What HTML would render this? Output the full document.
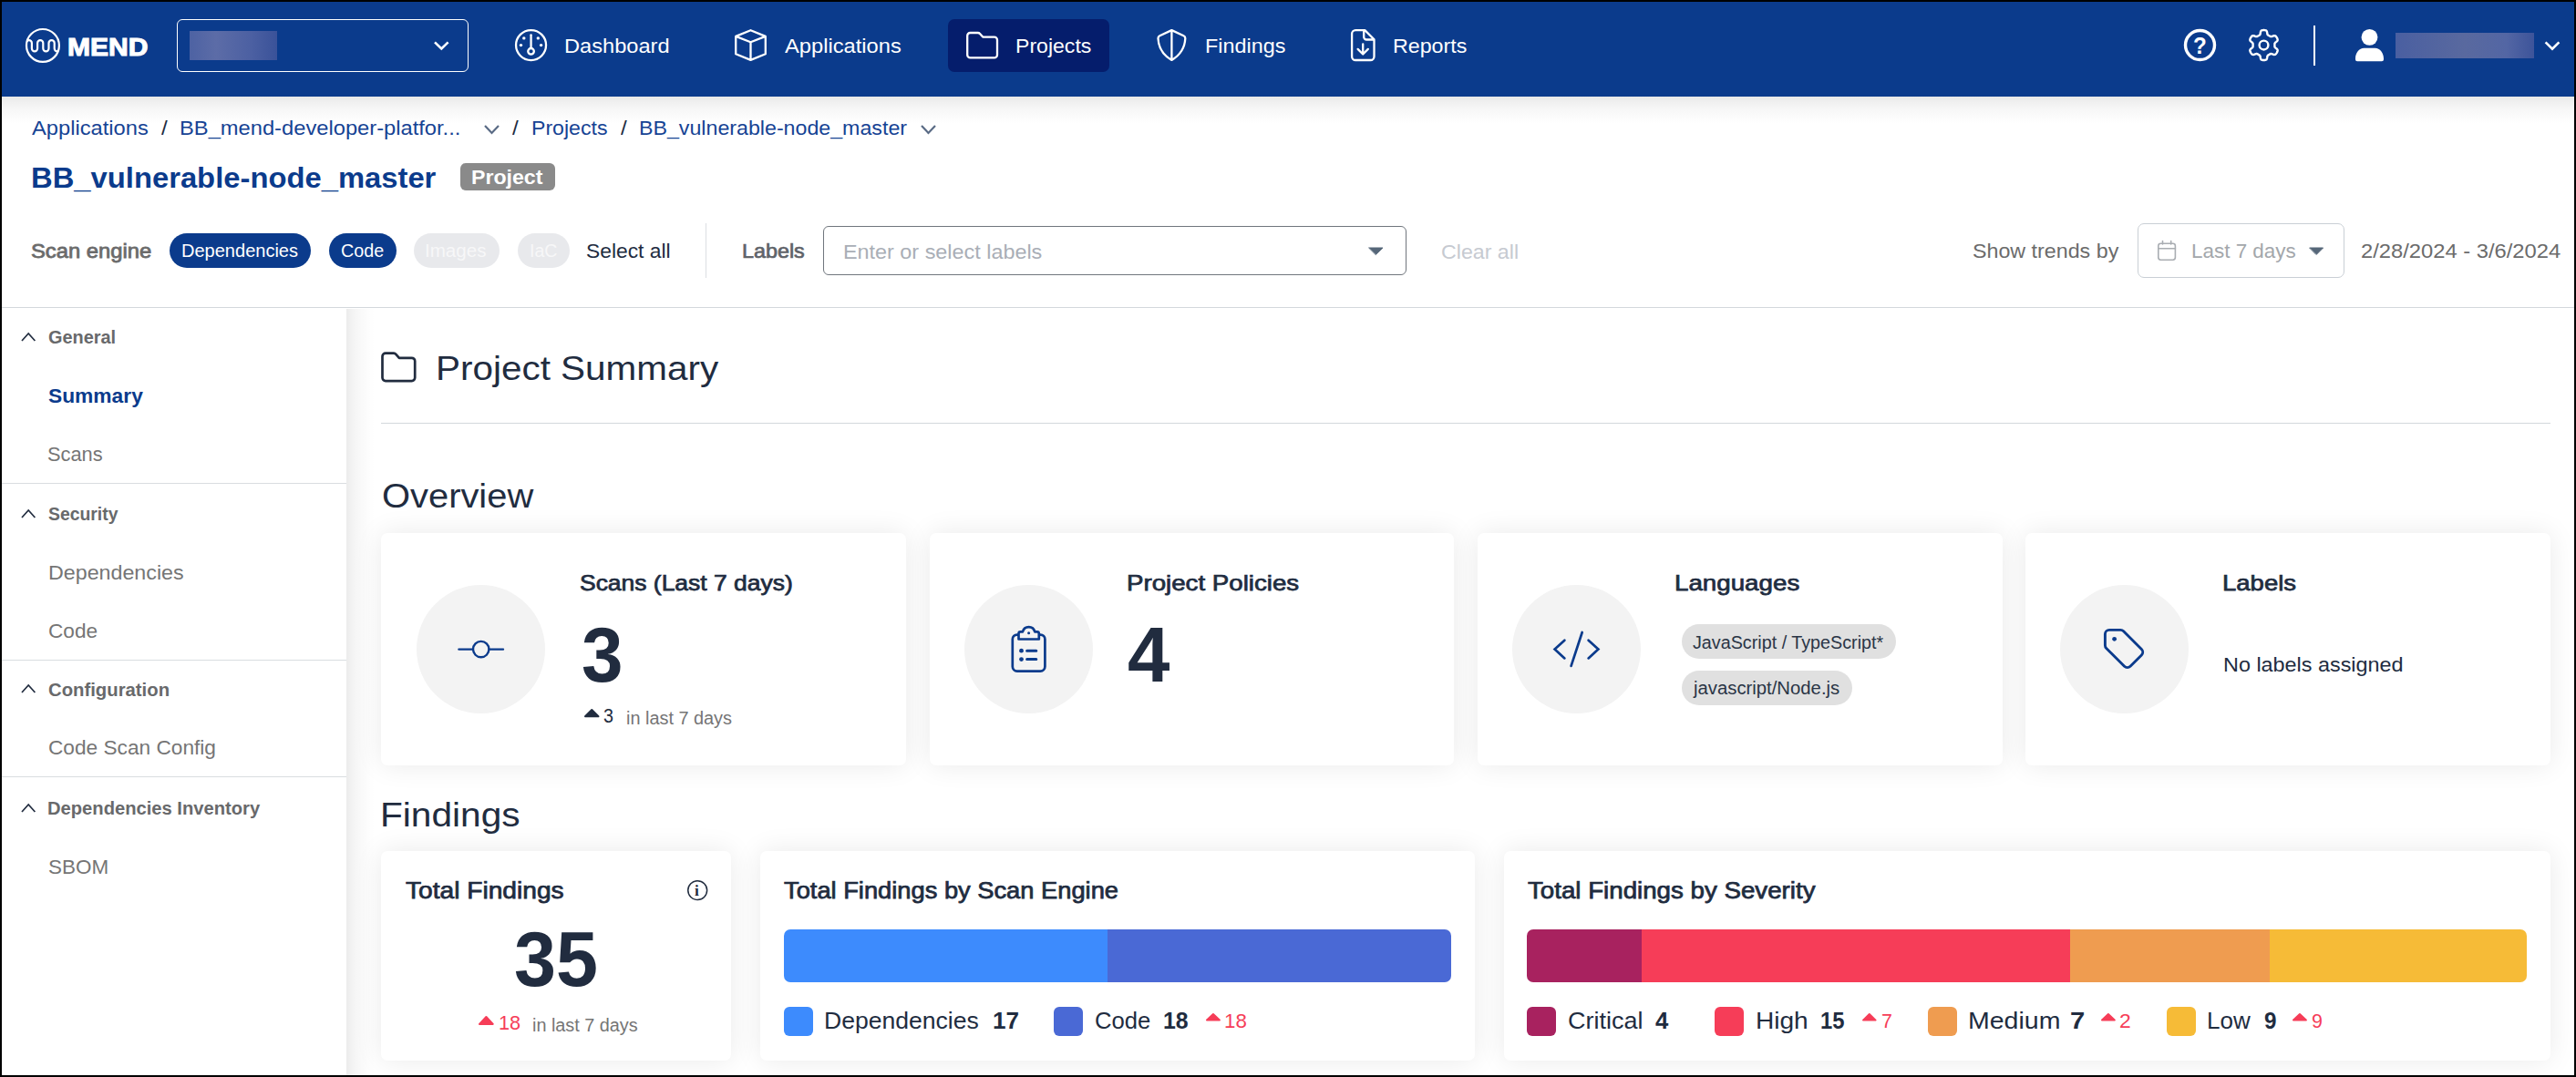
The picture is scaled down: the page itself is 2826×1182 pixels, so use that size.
<!DOCTYPE html>
<html lang="en">
<head>
<meta charset="utf-8">
<title>BB_vulnerable-node_master - Project Summary</title>
<style>

*{box-sizing:border-box;margin:0;padding:0}
html,body{width:2826px;height:1182px;overflow:hidden;background:#000}
body{font-family:"Liberation Sans",sans-serif;color:#212c3f}
#app{position:absolute;left:2px;top:2px;width:2822px;height:1178px;background:#fff;overflow:hidden}
#app>header,#app>nav,#app>section,#app>aside,#app>main{display:contents}
#app .abs, #app svg, .t{position:absolute}
.t{white-space:pre;line-height:1;transform-origin:0 0;display:block;font-weight:400;font-style:normal}
.navbg{left:0;top:0;width:2822px;height:104px;background:#0b3b8c}
.navshadow{left:0;top:103.5px;width:2822px;height:30px;background:linear-gradient(#e8e8e8 0,#f0f0f0 20%,#f7f7f7 48%,#fcfcfc 80%,#fff 100%)}
.org{left:192px;top:19px;width:320px;height:58px;border:1.5px solid #fff;border-radius:6px}
.blur1{left:206px;top:32px;width:96px;height:32px;background:linear-gradient(90deg,#4d62a3,#5c6ca7 30%,#4c60a2 70%,#3a5299)}
.blur2{left:2626px;top:33.9px;width:152px;height:28px;background:linear-gradient(90deg,#4a5fa1,#59699f 50%,#5366a4 80%,#3d549a)}
.tab{left:1038px;top:19px;width:177px;height:58px;background:#051d6c;border-radius:7px}
.vbar{left:2535.6px;top:26.3px;width:2.5px;height:43.5px;background:#fff}
.badge{left:503px;top:177px;width:104px;height:30px;background:#8a8a8a;border-radius:6px}
.chip{height:38px;top:254px;border-radius:19px;background:#0b3b8c}
.chip.off{background:#e8e9ec}
.vdiv{left:771.5px;top:243px;width:1.5px;height:60px;background:#dcdfe3}
.input{left:901px;top:246px;width:640px;height:53.5px;border:1.5px solid #70767d;border-radius:6px;background:#fff}
.trend{left:2343px;top:243px;width:227px;height:60px;border:1.5px solid #c9cfd5;border-radius:7px;background:#fff}
.hline{left:0;top:334.7px;width:2822px;height:1.6px;background:#d3d8dc}
.sidebg{left:0;top:336.3px;width:378px;height:842px;background:#fff}
.sdiv{left:0;width:378px;height:1.3px;background:#d9dde0}
.mainbg{left:378px;top:336.3px;width:2444px;height:842px;background:#fff}
.mshadow{left:378px;top:336.5px;width:32px;height:842px;background:linear-gradient(90deg,rgba(0,0,0,.078),rgba(0,0,0,.048) 20%,rgba(0,0,0,.024) 48%,rgba(0,0,0,.008) 75%,rgba(0,0,0,0))}
.hr{left:416px;top:461.8px;width:2380px;height:1.6px;background:#d3d8dc}
.card{background:#fff;border-radius:7px;box-shadow:0 0 30px rgba(0,0,0,.085)}
.circ{width:141px;height:141px;border-radius:50%;background:#f3f3f3;top:640px}
.lchip{left:1843px;height:37.4px;border-radius:19px;background:#e0e0e0}
.bar{top:1018px;height:58px;border-radius:7px;overflow:hidden}
.bar i{position:absolute;top:0;height:58px}
.sq{top:1103px;width:32px;height:32px;border-radius:6px}

</style>
</head>
<body>
<div id="app">
<header id="topnav">
<div class="abs navbg" style=""></div>
<div class="abs navshadow" style=""></div>
<svg style="left:23.00px;top:26.00px" width="44.00" height="44.00" viewBox="25.00 28.00 44.00 44.00" fill="none" stroke-linecap="round" stroke-linejoin="round" ><defs><clipPath id="lc"><circle cx="46.95" cy="49.95" r="18.4"/></clipPath></defs><circle cx="46.95" cy="49.95" r="17.95" stroke="#fff" stroke-width="2.2"/><path d="M28.7,51 V47.3 A3.1,3.1 0 0 1 34.9,47.3 V53.2 A3.1,3.1 0 0 0 41.1,53.2 V47.3 A3.1,3.1 0 0 1 47.3,47.3 V53.2 A3.1,3.1 0 0 0 53.5,53.2 V47.3 A3.1,3.1 0 0 1 59.7,47.3 V53.2 A3.1,3.1 0 0 0 65.9,53.2" stroke="#fff" stroke-width="2.2" clip-path="url(#lc)"/></svg>
<div class="abs org" style=""></div>
<div class="abs blur1" style=""></div>
<svg style="left:470.00px;top:40.00px" width="24.00" height="18.00" viewBox="472.00 42.00 24.00 18.00" fill="none" stroke-linecap="round" stroke-linejoin="round" ><path d="M477,46.4 L484.3,53.5 L491.600,46.4" stroke="#fff" stroke-width="2.6" stroke-linecap="butt" stroke-linejoin="miter"/></svg>
<svg style="left:561.00px;top:28.00px" width="39.00" height="39.00" viewBox="563.00 30.00 39.00 39.00" fill="none" stroke-linecap="round" stroke-linejoin="round" ><circle cx="582.55" cy="49.55" r="16.5" stroke="#fff" stroke-width="2.3"/><path d="M582.55,38.3 V53" stroke="#fff" stroke-width="2.3"/><circle cx="582.55" cy="56.3" r="3.3" stroke="#fff" stroke-width="2.3"/><g fill="#fff"><circle cx="571.5" cy="49.6" r="1.7"/><circle cx="574.8" cy="41.9" r="1.7"/><circle cx="590.3" cy="41.9" r="1.7"/><circle cx="593.6" cy="49.6" r="1.7"/></g></svg>
<svg style="left:801.00px;top:28.00px" width="41.00" height="39.00" viewBox="803.00 30.00 41.00 39.00" fill="none" stroke-linecap="round" stroke-linejoin="round" ><path d="M823.5,33.2 L839.8,39.9 V59.2 L823.5,65.9 L807.2,59.2 V39.9 Z M807.2,39.9 L823.5,46.3 L839.8,39.9 M823.5,46.3 V65.9" stroke="#fff" stroke-width="2.3"/></svg>
<div class="abs tab" style=""></div>
<svg style="left:1056.00px;top:30.00px" width="40.00" height="35.00" viewBox="1058.00 32.00 40.00 35.00" fill="none" stroke-linecap="round" stroke-linejoin="round" ><path d="M1061.2,39.2 a3.2,3.2 0 0 1 3.2,-3.2 h8.3 a3,3 0 0 1 2.3,1 l3.2,3.6 h12.6 a3.2,3.2 0 0 1 3.2,3.2 v16.4 a3.2,3.2 0 0 1 -3.2,3.2 h-26.4 a3.2,3.2 0 0 1 -3.2,-3.2 z" stroke="#fff" stroke-width="2.3"/></svg>
<svg style="left:1264.00px;top:28.00px" width="39.00" height="39.00" viewBox="1266.00 30.00 39.00 39.00" fill="none" stroke-linecap="round" stroke-linejoin="round" ><path d="M1285.4,33.100 L1272.3,39.2 Q1270.4,40.100 1270.5,42.300 C1271,52 1276.200,60.600 1285.4,65.900 C1294.600,60.600 1299.800,52 1300.300,42.300 Q1300.4,40.100 1298.500,39.2 Z M1285.4,33.100 V65.900" stroke="#fff" stroke-width="2.3"/></svg>
<svg style="left:1477.00px;top:28.00px" width="33.00" height="39.00" viewBox="1479.00 30.00 33.00 39.00" fill="none" stroke-linecap="round" stroke-linejoin="round" ><path d="M1487.100,33.100 h10.200 l10.200,10.200 v18.700 a4,4 0 0 1 -4,4 h-16.400 a4,4 0 0 1 -4,-4 v-24.900 a4,4 0 0 1 4,-4 z M1496.200,33.300 v7.200 a3,3 0 0 0 3,3 h8.100" stroke="#fff" stroke-width="2.3"/><path d="M1495.200,48.300 V59.200 M1489.600,53.900 L1495.200,59.500 L1500.800,53.900" stroke="#fff" stroke-width="2.3"/></svg>
<svg style="left:2391.00px;top:27.00px" width="41.00" height="41.00" viewBox="2393.00 29.00 41.00 41.00" fill="none" stroke-linecap="round" stroke-linejoin="round" ><circle cx="2413.5" cy="49.55" r="16" stroke="#fff" stroke-width="3.4"/></svg>
<svg style="left:2462.00px;top:27.00px" width="40.00" height="41.00" viewBox="2464.00 29.00 40.00 41.00" fill="none" stroke-linecap="round" stroke-linejoin="round" ><path d="M2483.50,33.05 L2484.22,33.07 L2484.94,33.15 L2485.64,33.30 L2486.30,33.65 L2486.85,34.43 L2487.18,35.83 L2487.38,37.24 L2487.69,38.04 L2488.10,38.45 L2488.54,38.73 L2489.00,38.99 L2489.45,39.24 L2489.90,39.51 L2490.35,39.77 L2490.81,40.02 L2491.37,40.17 L2492.22,40.03 L2493.54,39.51 L2494.92,39.08 L2495.87,39.17 L2496.50,39.57 L2496.99,40.11 L2497.41,40.69 L2497.79,41.30 L2498.13,41.93 L2498.42,42.59 L2498.64,43.28 L2498.68,44.03 L2498.27,44.89 L2497.22,45.87 L2496.10,46.76 L2495.56,47.42 L2495.41,47.98 L2495.39,48.51 L2495.40,49.03 L2495.40,49.55 L2495.40,50.07 L2495.39,50.59 L2495.41,51.12 L2495.56,51.68 L2496.10,52.34 L2497.22,53.23 L2498.27,54.21 L2498.68,55.07 L2498.64,55.82 L2498.42,56.51 L2498.13,57.17 L2497.79,57.80 L2497.41,58.41 L2496.99,58.99 L2496.50,59.53 L2495.87,59.93 L2494.92,60.02 L2493.54,59.59 L2492.22,59.07 L2491.37,58.93 L2490.81,59.08 L2490.35,59.33 L2489.90,59.59 L2489.45,59.86 L2489.00,60.11 L2488.54,60.37 L2488.10,60.65 L2487.69,61.06 L2487.38,61.86 L2487.18,63.27 L2486.85,64.67 L2486.30,65.45 L2485.64,65.80 L2484.94,65.95 L2484.22,66.03 L2483.50,66.05 L2482.78,66.03 L2482.06,65.95 L2481.36,65.80 L2480.70,65.45 L2480.15,64.67 L2479.82,63.27 L2479.62,61.86 L2479.31,61.06 L2478.90,60.65 L2478.46,60.37 L2478.00,60.11 L2477.55,59.86 L2477.10,59.59 L2476.65,59.33 L2476.19,59.08 L2475.63,58.93 L2474.78,59.07 L2473.46,59.59 L2472.08,60.02 L2471.13,59.93 L2470.50,59.53 L2470.01,58.99 L2469.59,58.41 L2469.21,57.80 L2468.87,57.17 L2468.58,56.51 L2468.36,55.82 L2468.32,55.07 L2468.73,54.21 L2469.78,53.23 L2470.90,52.34 L2471.44,51.68 L2471.59,51.12 L2471.61,50.59 L2471.60,50.07 L2471.60,49.55 L2471.60,49.03 L2471.61,48.51 L2471.59,47.98 L2471.44,47.42 L2470.90,46.76 L2469.78,45.87 L2468.73,44.89 L2468.32,44.03 L2468.36,43.28 L2468.58,42.59 L2468.87,41.93 L2469.21,41.30 L2469.59,40.69 L2470.01,40.11 L2470.50,39.57 L2471.13,39.17 L2472.08,39.08 L2473.46,39.51 L2474.78,40.03 L2475.63,40.17 L2476.19,40.02 L2476.65,39.77 L2477.10,39.51 L2477.55,39.24 L2478.00,38.99 L2478.46,38.73 L2478.90,38.45 L2479.31,38.04 L2479.62,37.24 L2479.82,35.83 L2480.15,34.43 L2480.70,33.65 L2481.36,33.30 L2482.06,33.15 L2482.78,33.07 Z" stroke="#fff" stroke-width="2.4"/><circle cx="2483.5" cy="49.55" r="4.9" stroke="#fff" stroke-width="2.4"/></svg>
<div class="abs vbar" style=""></div>
<svg style="left:2580.00px;top:28.00px" width="35.00" height="39.00" viewBox="2582.00 30.00 35.00 39.00" fill="none" stroke-linecap="round" stroke-linejoin="round" ><circle cx="2599.500" cy="40.850" r="8.950" fill="#fff"/><path d="M2593.500,52.700 h12 c5.500,0 9.500,5.500 9.500,11.500 v1 a2,2 0 0 1 -2,2 h-27 a2,2 0 0 1 -2,-2 v-1 c0,-6 4,-11.500 9.500,-11.500 z" fill="#fff"/></svg>
<div class="abs blur2" style=""></div>
<svg style="left:2786.00px;top:40.00px" width="24.00" height="18.00" viewBox="2788.00 42.00 24.00 18.00" fill="none" stroke-linecap="round" stroke-linejoin="round" ><path d="M2792.6,46.4 L2800,53.7 L2807.4,46.4" stroke="#fff" stroke-width="2.6" stroke-linecap="butt" stroke-linejoin="miter"/></svg>
<b class="t" style="left:71.74px;top:34.50px;font-size:28.4px;color:#fff;transform:scaleX(1.0574);font-weight:700;-webkit-text-stroke:1.1px #fff">MEND</b>
<span class="t" style="left:617.45px;top:38.00px;font-size:22.6px;color:#fff;transform:scaleX(1.0462)">Dashboard</span>
<span class="t" style="left:859.00px;top:38.00px;font-size:22.6px;color:#fff;transform:scaleX(1.0491)">Applications</span>
<span class="t" style="left:1111.98px;top:38.00px;font-size:22.6px;color:#fff;transform:scaleX(1.0209)">Projects</span>
<span class="t" style="left:1320.47px;top:38.00px;font-size:22.6px;color:#fff;transform:scaleX(1.0345)">Findings</span>
<span class="t" style="left:1525.97px;top:38.00px;font-size:22.6px;color:#fff;transform:scaleX(1.0281)">Reports</span>
<span class="t" style="left:2404.45px;top:35.70px;font-size:25.3px;color:#fff;transform:scaleX(0.9538);font-weight:700">?</span>
</header>
<nav id="breadcrumbs">
<svg style="left:526.50px;top:133.00px" width="21.00" height="14.00" viewBox="528.50 135.00 21.00 14.00" fill="none" stroke-linecap="round" stroke-linejoin="round" ><path d="M531.50,138.00 L539.00,146.00 L546.50,138.00" stroke="#5a6b85" stroke-width="2.2" stroke-linecap="butt" stroke-linejoin="miter"/></svg>
<svg style="left:1006.00px;top:133.30px" width="21.00" height="14.00" viewBox="1008.00 135.30 21.00 14.00" fill="none" stroke-linecap="round" stroke-linejoin="round" ><path d="M1011.00,138.30 L1018.50,146.30 L1026.00,138.30" stroke="#5a6b85" stroke-width="2.2" stroke-linecap="butt" stroke-linejoin="miter"/></svg>
<div class="abs badge" style=""></div>
<span class="t" style="left:33.00px;top:127.50px;font-size:22.5px;color:#164394;transform:scaleX(1.0531)">Applications</span>
<span class="t" style="left:174.50px;top:127.50px;font-size:22.5px;color:#212c3f;transform:scaleX(1.0714)">/</span>
<span class="t" style="left:194.95px;top:127.50px;font-size:22.5px;color:#164394;transform:scaleX(1.0537)">BB_mend-developer-platfor...</span>
<span class="t" style="left:560.00px;top:127.50px;font-size:22.5px;color:#212c3f;transform:scaleX(1.0714)">/</span>
<span class="t" style="left:580.77px;top:127.50px;font-size:22.5px;color:#164394;transform:scaleX(1.0272)">Projects</span>
<span class="t" style="left:678.50px;top:127.50px;font-size:22.5px;color:#212c3f;transform:scaleX(1.0714)">/</span>
<span class="t" style="left:698.97px;top:127.50px;font-size:22.5px;color:#164394;transform:scaleX(1.0310)">BB_vulnerable-node_master</span>
<h1 class="t" style="left:31.92px;top:178.00px;font-size:31.5px;color:#0b3b8c;transform:scaleX(1.0403);font-weight:700">BB_vulnerable-node_master</h1>
<span class="t" style="left:514.95px;top:182.00px;font-size:22px;color:#fff;transform:scaleX(1.0504);font-weight:700">Project</span>
</nav>
<section id="filters">
<div class="abs chip" style="left:184px;width:155px"></div>
<div class="abs chip" style="left:359px;width:74px"></div>
<div class="abs chip off" style="left:452px;width:94px"></div>
<div class="abs chip off" style="left:566px;width:57px"></div>
<div class="abs vdiv" style=""></div>
<div class="abs input" style=""></div>
<svg style="left:1498.50px;top:269.30px" width="17.00" height="9.30" viewBox="1500.50 271.30 17.00 9.30" fill="none" stroke-linecap="round" stroke-linejoin="round" ><path d="M1501.5,272.3 H1516.5 L1509.0,279.6 Z" fill="#566779" stroke="#566779" stroke-width="1" /></svg>
<div class="abs trend" style=""></div>
<svg style="left:2363.00px;top:260.00px" width="24.00" height="26.00" viewBox="2365.00 262.00 24.00 26.00" fill="none" stroke-linecap="round" stroke-linejoin="round" ><rect x="2367.8" y="267.2" width="18.6" height="18" rx="2.6" stroke="#a9adb2" stroke-width="1.6"/><path d="M2367.8,272.8 H2386.4 M2372.5,264.6 V268 M2381.7,264.6 V268" stroke="#a9adb2" stroke-width="1.6"/></svg>
<svg style="left:2531.00px;top:269.30px" width="16.60" height="9.30" viewBox="2533.00 271.30 16.60 9.30" fill="none" stroke-linecap="round" stroke-linejoin="round" ><path d="M2534,272.3 H2548.6 L2541.3,279.6 Z" fill="#566779" stroke="#566779" stroke-width="1" /></svg>
<div class="abs hline" style=""></div>
<span class="t" style="left:31.96px;top:261.60px;font-size:22.8px;color:#6b6b6b;transform:scaleX(1.0434);-webkit-text-stroke:0.8px #6b6b6b">Scan engine</span>
<span class="t" style="left:197.00px;top:263.00px;font-size:20px;color:#fff;transform:scaleX(1.0010)">Dependencies</span>
<span class="t" style="left:371.51px;top:263.00px;font-size:20px;color:#fff;transform:scaleX(0.9852)">Code</span>
<span class="t" style="left:464.47px;top:263.00px;font-size:20px;color:#f7f7f8;transform:scaleX(1.0296)">Images</span>
<span class="t" style="left:579.02px;top:263.00px;font-size:20px;color:#f7f7f8;transform:scaleX(0.9771)">IaC</span>
<span class="t" style="left:641.49px;top:263.00px;font-size:22.5px;color:#212c3f;transform:scaleX(1.0135)">Select all</span>
<span class="t" style="left:811.96px;top:263.00px;font-size:22.5px;color:#5f6369;transform:scaleX(1.0376);-webkit-text-stroke:0.7px #5f6369">Labels</span>
<span class="t" style="left:922.96px;top:263.70px;font-size:22.5px;color:#a9aeb6;transform:scaleX(1.0390)">Enter or select labels</span>
<span class="t" style="left:1578.97px;top:263.50px;font-size:22.5px;color:#c6cad1;transform:scaleX(1.0307)">Clear all</span>
<span class="t" style="left:2161.97px;top:263.00px;font-size:22.5px;color:#6b6b6b;transform:scaleX(1.0334)">Show trends by</span>
<span class="t" style="left:2401.50px;top:263.00px;font-size:22.5px;color:#a3a7ab;transform:scaleX(0.9972)">Last 7 days</span>
<span class="t" style="left:2588.34px;top:263.00px;font-size:22.5px;color:#6b6b6b;transform:scaleX(1.0555)">2/28/2024 - 3/6/2024</span>
</section>
<aside id="sidebar">
<div class="abs sidebg" style=""></div>
<div class="abs sdiv" style="top:528.2px"></div>
<div class="abs sdiv" style="top:721.8px"></div>
<div class="abs sdiv" style="top:850.2px"></div>
<svg style="left:18.90px;top:360.80px" width="20.40" height="14.00" viewBox="20.90 362.80 20.40 14.00" fill="none" stroke-linecap="round" stroke-linejoin="round" ><path d="M23.90,373.80 L31.10,365.80 L38.30,373.80" stroke="#212c3f" stroke-width="1.7" stroke-linecap="butt" stroke-linejoin="miter"/></svg>
<svg style="left:18.90px;top:554.50px" width="20.40" height="14.00" viewBox="20.90 556.50 20.40 14.00" fill="none" stroke-linecap="round" stroke-linejoin="round" ><path d="M23.90,567.50 L31.10,559.50 L38.30,567.50" stroke="#212c3f" stroke-width="1.7" stroke-linecap="butt" stroke-linejoin="miter"/></svg>
<svg style="left:18.90px;top:747.40px" width="20.40" height="14.00" viewBox="20.90 749.40 20.40 14.00" fill="none" stroke-linecap="round" stroke-linejoin="round" ><path d="M23.90,760.40 L31.10,752.40 L38.30,760.40" stroke="#212c3f" stroke-width="1.7" stroke-linecap="butt" stroke-linejoin="miter"/></svg>
<svg style="left:18.90px;top:877.70px" width="20.40" height="14.00" viewBox="20.90 879.70 20.40 14.00" fill="none" stroke-linecap="round" stroke-linejoin="round" ><path d="M23.90,890.70 L31.10,882.70 L38.30,890.70" stroke="#212c3f" stroke-width="1.7" stroke-linecap="butt" stroke-linejoin="miter"/></svg>
<span class="t" style="left:51.00px;top:358.00px;font-size:20px;color:#68696b;transform:scaleX(0.9956);font-weight:700">General</span>
<span class="t" style="left:51.40px;top:421.60px;font-size:22px;color:#0b3b8c;transform:scaleX(1.0353);font-weight:700">Summary</span>
<span class="t" style="left:50.43px;top:485.50px;font-size:22.5px;color:#757575;transform:scaleX(0.9693)">Scans</span>
<span class="t" style="left:50.60px;top:551.70px;font-size:20px;color:#68696b;transform:scaleX(0.9686);font-weight:700">Security</span>
<span class="t" style="left:50.97px;top:615.60px;font-size:22.5px;color:#757575;transform:scaleX(1.0329)">Dependencies</span>
<span class="t" style="left:51.00px;top:679.50px;font-size:22.5px;color:#757575;transform:scaleX(1.0043)">Code</span>
<span class="t" style="left:51.00px;top:744.70px;font-size:20px;color:#68696b;transform:scaleX(1.0149);font-weight:700">Configuration</span>
<span class="t" style="left:50.99px;top:808.00px;font-size:22.5px;color:#757575;transform:scaleX(1.0072)">Code Scan Config</span>
<span class="t" style="left:49.99px;top:875.00px;font-size:20px;color:#68696b;transform:scaleX(1.0084);font-weight:700">Dependencies Inventory</span>
<span class="t" style="left:50.60px;top:938.50px;font-size:22.5px;color:#757575;transform:scaleX(0.9982)">SBOM</span>
</aside>
<main id="content">
<div class="abs mainbg" style=""></div>
<div class="abs mshadow" style=""></div>
<svg style="left:413.00px;top:382.00px" width="44.00" height="39.00" viewBox="415.00 384.00 44.00 39.00" fill="none" stroke-linecap="round" stroke-linejoin="round" ><path d="M419.5,391.200 a3.5,3.500 0 0 1 3.5,-3.500 h8.900 a3.2,3.200 0 0 1 2.500,1.100 l3.500,4 h13.800 a3.500,3.500 0 0 1 3.500,3.500 v18.300 a3.500,3.500 0 0 1 -3.500,3.500 h-28.700 a3.500,3.500 0 0 1 -3.500,-3.500 z" stroke="#212c3f" stroke-width="2.7"/></svg>
<div class="abs hr" style=""></div>
<div class="abs card" style="left:416.2px;top:583px;width:575.4px;height:254.8px"></div>
<div class="abs circ" style="left:455.2px"></div>
<div class="abs card" style="left:1017.9px;top:583px;width:575.4px;height:254.8px"></div>
<div class="abs circ" style="left:1055.7px"></div>
<div class="abs card" style="left:1619.3px;top:583px;width:575.4px;height:254.8px"></div>
<div class="abs circ" style="left:1657.1px"></div>
<div class="abs card" style="left:2220.2px;top:583px;width:575.4px;height:254.8px"></div>
<div class="abs circ" style="left:2258.0px"></div>
<svg style="left:496.00px;top:696.00px" width="60.00" height="30.00" viewBox="498.00 698.00 60.00 30.00" fill="none" stroke-linecap="round" stroke-linejoin="round" ><path d="M503.4,712.6 H518.6 M536.8,712.6 H552" stroke="#0b3b8c" stroke-width="2.4"/><circle cx="527.7" cy="712.6" r="8.7" stroke="#0b3b8c" stroke-width="2.4"/></svg>
<svg style="left:1104.00px;top:681.00px" width="46.00" height="59.00" viewBox="1106.00 683.00 46.00 59.00" fill="none" stroke-linecap="round" stroke-linejoin="round" ><rect x="1110.800" y="696.600" width="35.600" height="40" rx="5" stroke="#0b3b8c" stroke-width="2.7"/><path d="M1117.5,701.500 V695.400 a2,2 0 0 1 2,-2 h2.400 c0.900,-3.200 3.600,-5.300 6.700,-5.300 s5.800,2.100 6.700,5.300 h2.500 a2,2 0 0 1 2,2 V701.500 Z" stroke="#0b3b8c" stroke-width="2.700" fill="#f3f3f3"/><circle cx="1128.6" cy="694.800" r="1.500" fill="#0b3b8c"/><path d="M1126.6,714.200 H1136.800 M1126.6,723.600 H1136.800" stroke="#0b3b8c" stroke-width="3"/><circle cx="1120.5" cy="714.200" r="2.400" fill="#0b3b8c"/><circle cx="1120.5" cy="723.600" r="2.400" fill="#0b3b8c"/></svg>
<svg style="left:1698.00px;top:686.00px" width="60.00" height="50.00" viewBox="1700.00 688.00 60.00 50.00" fill="none" stroke-linecap="round" stroke-linejoin="round" ><path d="M1716.4,702.700 L1705.6,712.600 L1716.4,722.400 M1742.600,702.700 L1753.400,712.600 L1742.600,722.400 M1735.700,694 L1723.6,730.900" stroke="#0b3b8c" stroke-width="2.7" stroke-linejoin="miter"/></svg>
<svg style="left:2302.00px;top:684.00px" width="53.00" height="52.00" viewBox="2304.00 686.00 53.00 52.00" fill="none" stroke-linecap="round" stroke-linejoin="round" ><path d="M2309.4,696 a4.600,4.600 0 0 1 4.600,-4.600 h12.400 a4.600,4.600 0 0 1 3.250,1.350 l19.700,19.700 a4.600,4.600 0 0 1 0,6.500 l-12.300,12.300 a4.600,4.600 0 0 1 -6.500,0 l-19.800,-19.700 a4.600,4.600 0 0 1 -1.350,-3.250 z" stroke="#0b3b8c" stroke-width="2.900"/><circle cx="2319.6" cy="701.300" r="2.400" fill="#0b3b8c"/></svg>
<div class="abs lchip" style="top:683.2px;width:235px"></div>
<div class="abs lchip" style="top:734.4px;width:187px"></div>
<div class="abs card" style="left:416px;top:932px;width:384px;height:229.500px"></div>
<div class="abs card" style="left:832px;top:932px;width:784px;height:229.500px"></div>
<div class="abs card" style="left:1648.2px;top:932px;width:1147.800px;height:229.500px"></div>
<svg style="left:750.00px;top:962.00px" width="27.00" height="27.00" viewBox="752.00 964.00 27.00 27.00" fill="none" stroke-linecap="round" stroke-linejoin="round" ><circle cx="765.2" cy="977.1" r="10.450" stroke="#212c3f" stroke-width="1.500"/></svg>
<div class="abs bar" style="left:858px;width:732px;background:linear-gradient(90deg,#3d8bfd 0,#3d8bfd 355.5px,#4a69d5 355.5px,#4a69d5 100%)"></div>
<div class="abs bar" style="left:1673px;width:1097px;background:linear-gradient(90deg,#a8225f 0,#a8225f 126px,#f63d58 126px,#f63d58 596px,#ef9c50 596px,#ef9c50 815.2px,#f6bb37 815.2px,#f6bb37 100%)"></div>
<div class="abs sq" style="left:858.2px;background:#3d8bfd"></div>
<div class="abs sq" style="left:1154.0px;background:#4a69d5"></div>
<div class="abs sq" style="left:1673.0px;background:#a8225f"></div>
<div class="abs sq" style="left:1879.2px;background:#f63d58"></div>
<div class="abs sq" style="left:2113.1px;background:#ef9c50"></div>
<div class="abs sq" style="left:2375.2px;background:#f6bb37"></div>
<svg style="left:636.50px;top:774.00px" width="20.50" height="13.20" viewBox="638.50 776.00 20.50 13.20" fill="none" stroke-linecap="round" stroke-linejoin="round" ><path d="M641.5,786.2 L648.75,779 L656,786.2 Z" fill="#212c3f" stroke="#212c3f" stroke-width="2"/></svg>
<svg style="left:520.60px;top:1110.70px" width="20.80" height="13.90" viewBox="522.60 1112.70 20.80 13.90" fill="none" stroke-linecap="round" stroke-linejoin="round" ><path d="M525.6,1123.6 L533.0,1115.7 L540.4,1123.6 Z" fill="#f63d58" stroke="#f63d58" stroke-width="2"/></svg>
<svg style="left:1318.60px;top:1108.10px" width="19.90" height="12.60" viewBox="1320.60 1110.10 19.90 12.60" fill="none" stroke-linecap="round" stroke-linejoin="round" ><path d="M1323.6,1119.7 L1330.55,1113.1 L1337.5,1119.7 Z" fill="#f63d58" stroke="#f63d58" stroke-width="2"/></svg>
<svg style="left:2039.20px;top:1108.10px" width="19.60" height="12.60" viewBox="2041.20 1110.10 19.60 12.60" fill="none" stroke-linecap="round" stroke-linejoin="round" ><path d="M2044.2,1119.7 L2051.0,1113.1 L2057.8,1119.7 Z" fill="#f63d58" stroke="#f63d58" stroke-width="2"/></svg>
<svg style="left:2301.00px;top:1108.10px" width="19.80" height="12.60" viewBox="2303.00 1110.10 19.80 12.60" fill="none" stroke-linecap="round" stroke-linejoin="round" ><path d="M2306,1119.7 L2312.9,1113.1 L2319.8,1119.7 Z" fill="#f63d58" stroke="#f63d58" stroke-width="2"/></svg>
<svg style="left:2511.10px;top:1108.10px" width="19.90" height="12.60" viewBox="2513.10 1110.10 19.90 12.60" fill="none" stroke-linecap="round" stroke-linejoin="round" ><path d="M2516.1,1119.7 L2523.05,1113.1 L2530,1119.7 Z" fill="#f63d58" stroke="#f63d58" stroke-width="2"/></svg>
<h2 class="t" style="left:475.72px;top:384.00px;font-size:37px;color:#212c3f;transform:scaleX(1.0930)">Project Summary</h2>
<h3 class="t" style="left:416.92px;top:524.00px;font-size:37px;color:#212c3f;transform:scaleX(1.0777)">Overview</h3>
<h3 class="t" style="left:414.71px;top:874.00px;font-size:37px;color:#212c3f;transform:scaleX(1.0979)">Findings</h3>
<span class="t" style="left:633.52px;top:625.80px;font-size:24.5px;color:#212c3f;transform:scaleX(1.0795);-webkit-text-stroke:0.75px #212c3f">Scans (Last 7 days)</span>
<span class="t" style="left:635.73px;top:675.00px;font-size:84.5px;color:#212c3f;transform:scaleX(0.9674);font-weight:700">3</span>
<span class="t" style="left:660.00px;top:774.00px;font-size:21.5px;color:#212c3f;transform:scaleX(0.9167)">3</span>
<span class="t" style="left:685.01px;top:776.00px;font-size:20px;color:#757575;transform:scaleX(0.9937)">in last 7 days</span>
<span class="t" style="left:1234.14px;top:625.80px;font-size:24.5px;color:#212c3f;transform:scaleX(1.1293);-webkit-text-stroke:0.75px #212c3f">Project Policies</span>
<span class="t" style="left:1235.01px;top:675.10px;font-size:84.5px;color:#212c3f;transform:scaleX(0.9870);font-weight:700">4</span>
<span class="t" style="left:1835.44px;top:625.80px;font-size:24.5px;color:#212c3f;transform:scaleX(1.1319);-webkit-text-stroke:0.75px #212c3f">Languages</span>
<span class="t" style="left:1855.40px;top:692.70px;font-size:20px;color:#2a3546;transform:scaleX(0.9872)">JavaScript / TypeScript*</span>
<span class="t" style="left:1856.41px;top:743.40px;font-size:20px;color:#2a3546;transform:scaleX(1.0148)">javascript/Node.js</span>
<span class="t" style="left:2436.46px;top:625.80px;font-size:24.5px;color:#212c3f;transform:scaleX(1.1223);-webkit-text-stroke:0.75px #212c3f">Labels</span>
<span class="t" style="left:2437.16px;top:717.00px;font-size:22.5px;color:#212c3f;transform:scaleX(1.0392)">No labels assigned</span>
<span class="t" style="left:442.50px;top:962.90px;font-size:25.5px;color:#212c3f;transform:scaleX(1.1036);-webkit-text-stroke:0.75px #212c3f">Total Findings</span>
<span class="t" style="left:760.40px;top:967.80px;font-size:16px;color:#212c3f;transform:scaleX(1.0800);font-weight:700;font-family:'Liberation Serif',serif">i</span>
<span class="t" style="left:562.02px;top:1009.00px;font-size:84.5px;color:#212c3f;transform:scaleX(0.9781);font-weight:700">35</span>
<span class="t" style="left:545.03px;top:1110.40px;font-size:22.5px;color:#f63d58;transform:scaleX(0.9654)">18</span>
<span class="t" style="left:582.01px;top:1112.70px;font-size:20px;color:#757575;transform:scaleX(0.9911)">in last 7 days</span>
<span class="t" style="left:858.20px;top:962.90px;font-size:25.5px;color:#212c3f;transform:scaleX(1.0698);-webkit-text-stroke:0.75px #212c3f">Total Findings by Scan Engine</span>
<span class="t" style="left:902.36px;top:1105.00px;font-size:26px;color:#212c3f;transform:scaleX(1.0211)">Dependencies</span>
<span class="t" style="left:1086.66px;top:1106.00px;font-size:25px;color:#212c3f;transform:scaleX(1.0423);font-weight:700">17</span>
<span class="t" style="left:1198.71px;top:1105.00px;font-size:26px;color:#212c3f;transform:scaleX(0.9869)">Code</span>
<span class="t" style="left:1273.81px;top:1106.00px;font-size:25px;color:#212c3f;transform:scaleX(0.9924);font-weight:700">18</span>
<span class="t" style="left:1341.31px;top:1108.40px;font-size:22.5px;color:#f63d58;transform:scaleX(0.9909)">18</span>
<span class="t" style="left:1674.30px;top:962.90px;font-size:25.5px;color:#212c3f;transform:scaleX(1.0860);-webkit-text-stroke:0.75px #212c3f">Total Findings by Severity</span>
<span class="t" style="left:1717.96px;top:1105.00px;font-size:26px;color:#212c3f;transform:scaleX(1.0377)">Critical</span>
<span class="t" style="left:1813.60px;top:1106.00px;font-size:25px;color:#212c3f;transform:scaleX(1.0286);font-weight:700">4</span>
<span class="t" style="left:1923.74px;top:1105.00px;font-size:26px;color:#212c3f;transform:scaleX(1.0797)">High</span>
<span class="t" style="left:1995.25px;top:1106.00px;font-size:25px;color:#212c3f;transform:scaleX(0.9515);font-weight:700">15</span>
<span class="t" style="left:2062.35px;top:1108.40px;font-size:22.5px;color:#f63d58;transform:scaleX(0.9545)">7</span>
<span class="t" style="left:2156.81px;top:1105.00px;font-size:26px;color:#212c3f;transform:scaleX(1.0967)">Medium</span>
<span class="t" style="left:2269.23px;top:1106.00px;font-size:25px;color:#212c3f;transform:scaleX(1.1667);font-weight:700">7</span>
<span class="t" style="left:2323.38px;top:1108.40px;font-size:22.5px;color:#f63d58;transform:scaleX(1.0182)">2</span>
<span class="t" style="left:2419.30px;top:1105.00px;font-size:26px;color:#212c3f;transform:scaleX(0.9996)">Low</span>
<span class="t" style="left:2481.90px;top:1106.00px;font-size:25px;color:#212c3f;transform:scaleX(0.9692);font-weight:700">9</span>
<span class="t" style="left:2534.25px;top:1108.40px;font-size:22.5px;color:#f63d58;transform:scaleX(0.9545)">9</span>
</main>
</div>
</body>
</html>
